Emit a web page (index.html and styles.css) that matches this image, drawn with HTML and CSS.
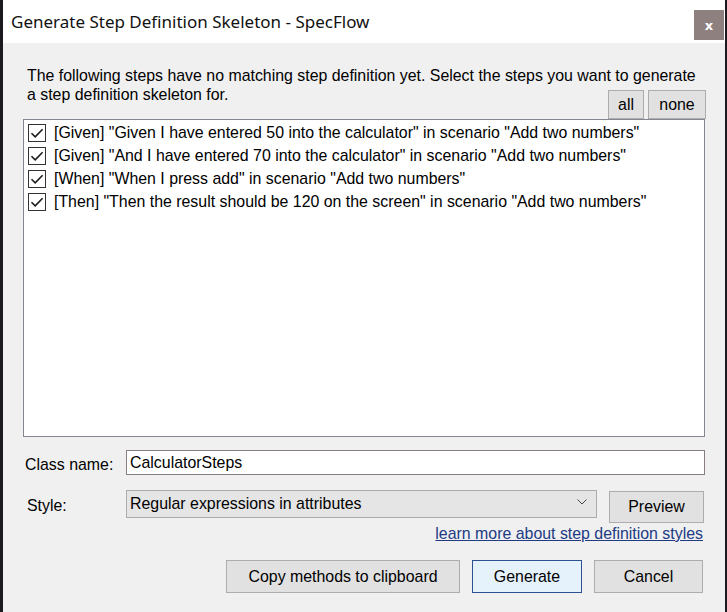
FILE: index.html
```html
<!DOCTYPE html>
<html>
<head>
<meta charset="utf-8">
<link rel="stylesheet" href="styles.css">
</head>
<body>
<div class="screen">
  <div class="window">
    <div class="titlebar">
      <div class="title">Generate Step Definition Skeleton - SpecFlow</div>
      <div class="close">x</div>
    </div>
    <div class="content">
      <div class="desc">The following steps have no matching step definition yet. Select the steps you want to generate</div>
      <div class="descrow">
        <div class="desc2">a step definition skeleton for.</div>
        <div class="selbtns">
          <button class="btn small all">all</button>
          <button class="btn small none">none</button>
        </div>
      </div>
      <div class="list">
        <div class="item"><span class="cb"><svg viewBox="0 0 18 18" width="18" height="18"><path d="M3.5 9.2 L7.2 12.9 L14.6 5.3" fill="none" stroke="#1c1c1c" stroke-width="1.6"/></svg></span>[Given] "Given I have entered 50 into the calculator" in scenario "Add two numbers"</div>
        <div class="item"><span class="cb"><svg viewBox="0 0 18 18" width="18" height="18"><path d="M3.5 9.2 L7.2 12.9 L14.6 5.3" fill="none" stroke="#1c1c1c" stroke-width="1.6"/></svg></span>[Given] "And I have entered 70 into the calculator" in scenario "Add two numbers"</div>
        <div class="item"><span class="cb"><svg viewBox="0 0 18 18" width="18" height="18"><path d="M3.5 9.2 L7.2 12.9 L14.6 5.3" fill="none" stroke="#1c1c1c" stroke-width="1.6"/></svg></span>[When] "When I press add" in scenario "Add two numbers"</div>
        <div class="item"><span class="cb"><svg viewBox="0 0 18 18" width="18" height="18"><path d="M3.5 9.2 L7.2 12.9 L14.6 5.3" fill="none" stroke="#1c1c1c" stroke-width="1.6"/></svg></span>[Then] "Then the result should be 120 on the screen" in scenario "Add two numbers"</div>
      </div>
      <div class="row classrow">
        <label class="lbl lbl-class">Class name:</label>
        <div class="input">CalculatorSteps</div>
      </div>
      <div class="row stylerow">
        <label class="lbl lbl-style">Style:</label>
        <div class="select">
          <span>Regular expressions in attributes</span>
          <svg class="chev" viewBox="0 0 10 6" width="10" height="6"><path d="M0.5 0.5 L5 5 L9.5 0.5" fill="none" stroke="#444" stroke-width="1"/></svg>
        </div>
        <button class="btn preview">Preview</button>
      </div>
      <div class="linkrow"><a class="link">learn more about step definition styles</a></div>
      <div class="actions">
        <button class="btn copy">Copy methods to clipboard</button>
        <button class="btn primary generate">Generate</button>
        <button class="btn cancel">Cancel</button>
      </div>
    </div>
  </div>
</div>
</body>
</html>
```

FILE: styles.css
```css
html, body {
  margin: 0;
  padding: 0;
}
body {
  width: 727px;
  height: 612px;
  overflow: hidden;
  background: #1b1b1f;
  font-family: "Liberation Sans", Arial, sans-serif;
  font-size: 15.9px;
  color: #000;
}
.screen {
  display: flex;
  height: 612px;
  padding-left: 3px;
}
.window {
  width: 722px;
  height: 612px;
  background: #f0f0f0;
  display: flex;
  flex-direction: column;
}
.titlebar {
  height: 43px;
  background: #ffffff;
  display: flex;
  align-items: flex-start;
}
.title {
  font-family: "Noto Sans", "Open Sans", sans-serif;
  font-size: 17px;
  color: #111;
  padding-left: 8px;
  padding-top: 11px;
  line-height: 22px;
}
.close {
  margin-left: auto;
  margin-right: 1px;
  margin-top: 10px;
  width: 30px;
  height: 30px;
  background: #8f8080;
  color: #fff;
  font-family: "DejaVu Sans", sans-serif;
  font-weight: bold;
  font-size: 13px;
  display: flex;
  align-items: center;
  justify-content: center;
}
.content {
  padding: 0 20px 0 20px;
  display: flex;
  flex-direction: column;
}
.desc {
  margin: 23px 0 0 4px;
  line-height: 19px;
  white-space: nowrap;
}
.descrow {
  display: flex;
  align-items: flex-start;
  justify-content: space-between;
}
.desc2 {
  margin-left: 4px;
  line-height: 19px;
}
.selbtns {
  display: flex;
  gap: 4px;
  margin-top: 5px;
  margin-right: -1px;
}
.btn {
  font-family: "Liberation Sans", Arial, sans-serif;
  font-size: 15.9px;
  color: #000;
  background: #e1e1e1;
  border: 1px solid #adadad;
  padding: 0;
  margin: 0;
  display: flex;
  align-items: center;
  justify-content: center;
}
.small {
  height: 29px;
}
.all { width: 36px; }
.none { width: 58px; }
.list {
  height: 318px;
  box-sizing: border-box;
  background: #fff;
  border: 1px solid #828790;
  padding: 1px 0 0 4px;
  display: flex;
  flex-direction: column;
}
.item {
  height: 23px;
  line-height: 23px;
  display: flex;
  align-items: center;
  white-space: nowrap;
}
.cb {
  width: 16px;
  height: 16px;
  border: 1px solid #333;
  background: #fff;
  margin-right: 8px;
  flex: none;
}
.cb svg {
  display: block;
  margin: -1px 0 0 -1px;
}
.row {
  display: flex;
  align-items: center;
}
.classrow {
  margin-top: 13px;
  height: 25px;
}
.lbl {
  width: 101px;
  flex: none;
}
.lbl-class {
  padding-left: 2px;
  padding-top: 4px;
}
.lbl-style {
  padding-left: 4px;
  width: 99px;
}
.input {
  width: 575px;
  height: 23px;
  line-height: 23px;
  border: 1px solid #8a7f7f;
  background: #fff;
  padding-left: 3px;
}
.stylerow {
  margin-top: 15px;
  align-items: flex-start;
}
.stylerow .lbl-style {
  line-height: 28px;
  padding-top: 2px;
}
.select {
  width: 466px;
  height: 26px;
  border: 1px solid #acacac;
  background: #e5e5e5;
  padding-left: 3px;
  display: flex;
  align-items: center;
  line-height: 26px;
}
.chev {
  margin-left: auto;
  margin-right: 9px;
  margin-top: -4px;
}
.preview {
  width: 95px;
  height: 32px;
  margin-left: 12px;
  margin-top: 1px;
}
.linkrow {
  display: flex;
  justify-content: flex-end;
  line-height: 18px;
  margin-right: 2px;
  padding-top: 2px;
}
.link {
  color: #213a84;
  text-decoration: underline;
}
.actions {
  display: flex;
  justify-content: flex-end;
  gap: 12px;
  margin-top: 17px;
  margin-right: 2px;
}
.actions .btn {
  height: 33px;
}
.copy { width: 234px; }
.generate { width: 110px; }
.cancel { width: 109px; }
.primary {
  background: #e5f1fb;
  border-color: #2c5090;
}
```
